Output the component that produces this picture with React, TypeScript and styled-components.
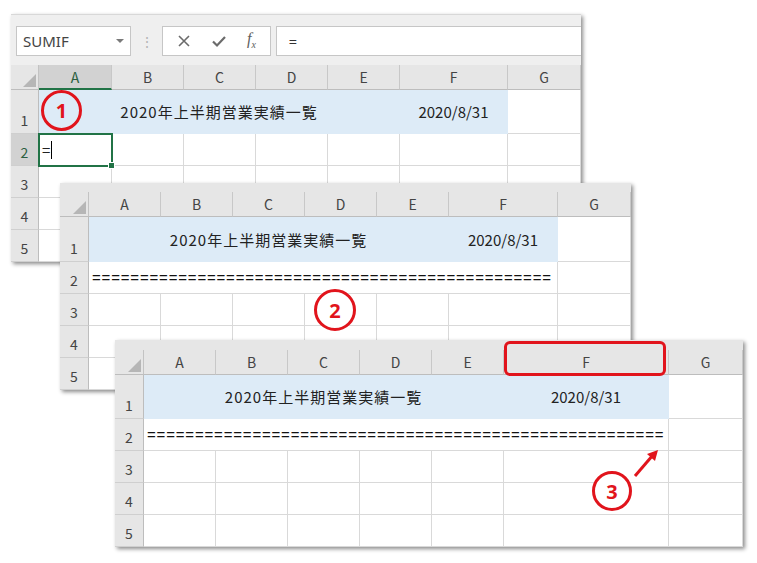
import React from 'react';
import styled, { createGlobalStyle } from 'styled-components';

const GlobalStyle = createGlobalStyle`
  html, body {
    margin: 0;
    padding: 0;
    background: #fff;
  }
  body {
    font-family: "Noto Sans CJK JP", "Noto Sans", sans-serif;
    color: #222;
  }
`;

const RED = '#e1141c';
const GREEN = '#217346';

const Canvas = styled.div`
  position: relative;
  width: 757px;
  height: 563px;
  overflow: hidden;
  background: #fff;
`;

// each screenshot sits on the canvas where it was pasted
const Sheet = styled.div<{ $x: number; $y: number; $z: number }>`
  position: absolute;
  left: ${p => p.$x}px;
  top: ${p => p.$y}px;
  z-index: ${p => p.$z};
  display: flex;
  flex-direction: column;
  background: #e6e6e6;
  box-shadow: 2px 2px 4px rgba(0, 0, 0, 0.45);
`;

const Toolbar = styled.div`
  display: flex;
  align-items: center;
  height: 51px;
  box-sizing: border-box;
  padding: 11px 0 10px 5px;
  background: #efefef;
  border-top: 1px solid #d8d8d8;
`;

const NameBox = styled.div`
  position: relative;
  width: 115px;
  height: 30px;
  box-sizing: border-box;
  display: flex;
  align-items: center;
  padding-left: 6px;
  background: #fff;
  border: 1px solid #c6c6c6;
  font-family: "Noto Sans", "Liberation Sans", sans-serif;
  font-size: 15px;
  color: #444;

  &::after {
    content: '';
    position: absolute;
    right: 6px;
    top: 12px;
    border-left: 4px solid transparent;
    border-right: 4px solid transparent;
    border-top: 4px solid #7a7a7a;
  }
`;

const Dots = styled.div`
  width: 31px;
  text-align: center;
  color: #b5b5b5;
  font-size: 14px;
  line-height: 1;
`;

const FxBox = styled.div`
  width: 109px;
  height: 30px;
  box-sizing: border-box;
  display: flex;
  align-items: center;
  justify-content: space-around;
  padding: 0 4px;
  background: #fff;
  border: 1px solid #c6c6c6;
  color: #6b6b6b;
`;

const FxLabel = styled.span`
  font-family: "Liberation Serif", serif;
  font-style: italic;
  font-size: 16px;
  color: #5e5e5e;

  sub {
    font-size: 10px;
  }
`;

const FormulaInput = styled.div`
  flex: 1;
  height: 30px;
  box-sizing: border-box;
  margin-left: 5px;
  display: flex;
  align-items: center;
  padding-left: 12px;
  background: #fff;
  border: 1px solid #c6c6c6;
  border-right: none;
  font-size: 14px;
  color: #333;
`;

const Strip = styled.div<{ $h: number }>`
  height: ${p => p.$h}px;
  background: #e6e6e6;
`;

const Grid = styled.div<{ $cols: string; $rows: string }>`
  display: grid;
  grid-template-columns: ${p => p.$cols};
  grid-template-rows: ${p => p.$rows};
  background: #fff;
`;

const Corner = styled.div`
  position: relative;
  background: #e6e6e6;
  border-right: 1px solid #c3c3c3;
  border-bottom: 1px solid #bdbdbd;

  &::after {
    content: '';
    position: absolute;
    right: 2px;
    bottom: 2px;
    border-left: 13px solid transparent;
    border-bottom: 13px solid #b6b6b6;
  }
`;

const ColHead = styled.div<{ $active?: boolean }>`
  display: flex;
  align-items: center;
  justify-content: center;
  box-sizing: border-box;
  background: ${p => (p.$active ? '#d2d2d2' : '#e6e6e6')};
  border-right: 1px solid #c8c8c8;
  border-bottom: ${p => (p.$active ? `2px solid ${GREEN}` : '1px solid #bdbdbd')};
  font-size: 14px;
  color: ${p => (p.$active ? '#2b5f40' : '#444')};
`;

const RowHead = styled.div<{ $active?: boolean }>`
  display: flex;
  align-items: flex-end;
  justify-content: center;
  padding-bottom: 3px;
  line-height: 20px;
  box-sizing: border-box;
  background: ${p => (p.$active ? '#d2d2d2' : '#e6e6e6')};
  border-right: 1px solid #bdbdbd;
  border-bottom: 1px solid #cfcfcf;
  font-size: 14px;
  color: ${p => (p.$active ? '#2b5f40' : '#444')};
`;

const Cell = styled.div<{ $span?: number; $fill?: string; $align?: string }>`
  grid-column: span ${p => p.$span ?? 1};
  display: flex;
  align-items: center;
  justify-content: ${p => p.$align ?? 'flex-start'};
  box-sizing: border-box;
  min-width: 0;
  overflow: hidden;
  white-space: nowrap;
  background: ${p => p.$fill ?? '#fff'};
  border-right: 1px solid ${p => p.$fill ?? '#d9d9d9'};
  border-bottom: 1px solid ${p => p.$fill ?? '#d9d9d9'};
  font-size: 15px;
  color: #222;
`;

const Title = styled.span`
  letter-spacing: 1px;
`;

const ActiveCell = styled(Cell)`
  position: relative;
  overflow: visible;
  padding-left: 3px;
  outline: 2px solid ${GREEN};
  outline-offset: -1px;
  z-index: 1;

  &::after {
    content: '';
    position: absolute;
    right: -4px;
    bottom: -4px;
    width: 5px;
    height: 5px;
    background: ${GREEN};
    border: 1px solid #fff;
  }
`;

const Caret = styled.span`
  display: inline-block;
  width: 1px;
  height: 18px;
  margin-left: 1px;
  background: #000;
`;

const Equals = styled.span`
  padding-left: 3px;
  font-family: "Liberation Sans", sans-serif;
  font-size: 15px;
  letter-spacing: 0.82px;
  color: #111;
`;

const Badge = styled.div<{ $x: number; $y: number; $size: number; $bg: string }>`
  position: absolute;
  left: ${p => p.$x}px;
  top: ${p => p.$y}px;
  z-index: 10;
  width: ${p => p.$size}px;
  height: ${p => p.$size}px;
  box-sizing: border-box;
  display: flex;
  align-items: center;
  justify-content: center;
  border: 3px solid ${RED};
  border-radius: 50%;
  background: ${p => p.$bg};
  font-family: "Noto Sans", "Liberation Sans", sans-serif;
  font-weight: 700;
  font-size: 20px;
  color: ${RED};
`;

const Frame = styled.div`
  position: absolute;
  left: 504px;
  top: 341px;
  width: 162px;
  height: 35px;
  box-sizing: border-box;
  z-index: 10;
  border: 3px solid ${RED};
  border-radius: 6px;
`;

const ArrowSvg = styled.svg`
  position: absolute;
  left: 628px;
  top: 444px;
  z-index: 10;
`;

const COLS = ['A', 'B', 'C', 'D', 'E', 'F', 'G'];

type SheetProps = {
  x: number;
  y: number;
  z: number;
  rowHeadW: number;
  colW: number[];
  strip?: number;
  rowH: number[];
  toolbar?: boolean;
  eqCount?: number;
};

const XIcon = () => (
  <svg width="14" height="14" viewBox="0 0 14 14">
    <path d="M2 2 L12 12 M12 2 L2 12" stroke="#6b6b6b" strokeWidth="1.6" fill="none" />
  </svg>
);

const CheckIcon = () => (
  <svg width="16" height="14" viewBox="0 0 16 14">
    <path d="M2 7.5 L6 11.5 L14 3" stroke="#6b6b6b" strokeWidth="2.2" fill="none" />
  </svg>
);

const SheetView = ({ x, y, z, rowHeadW, colW, strip, rowH, toolbar, eqCount }: SheetProps) => {
  const cols = [rowHeadW, ...colW].map(w => `${w}px`).join(' ');
  const rows = [25, ...rowH].map(h => `${h}px`).join(' ');
  const active = !!toolbar;

  return (
    <Sheet $x={x} $y={y} $z={z}>
      {toolbar && (
        <Toolbar>
          <NameBox>SUMIF</NameBox>
          <Dots>⋮</Dots>
          <FxBox>
            <XIcon />
            <CheckIcon />
            <FxLabel>
              f<sub>x</sub>
            </FxLabel>
          </FxBox>
          <FormulaInput>=</FormulaInput>
        </Toolbar>
      )}
      {strip ? <Strip $h={strip} /> : null}
      <Grid $cols={cols} $rows={rows}>
        <Corner />
        {COLS.map((c, i) => (
          <ColHead key={c} $active={active && i === 0}>
            {c}
          </ColHead>
        ))}

        <RowHead>1</RowHead>
        <Cell $span={5} $fill="#ddebf7" $align="center">
          <Title>2020年上半期営業実績一覧</Title>
        </Cell>
        <Cell $fill="#ddebf7" $align="center">
          2020/8/31
        </Cell>
        <Cell />

        <RowHead $active={active}>2</RowHead>
        {eqCount ? (
          <>
            <Cell $span={6}>
              <Equals>{'='.repeat(eqCount)}</Equals>
            </Cell>
            <Cell />
          </>
        ) : (
          <>
            <ActiveCell>
              =<Caret />
            </ActiveCell>
            {COLS.slice(1).map(c => (
              <Cell key={c} />
            ))}
          </>
        )}

        {[3, 4, 5].map(r => (
          <React.Fragment key={r}>
            <RowHead>{r}</RowHead>
            {COLS.map(c => (
              <Cell key={c} />
            ))}
          </React.Fragment>
        ))}
      </Grid>
    </Sheet>
  );
};

export default function App() {
  return (
    <Canvas>
      <GlobalStyle />
      <SheetView
        x={11}
        y={14}
        z={1}
        toolbar
        rowHeadW={28}
        colW={[73, 72, 72, 72, 72, 108, 73]}
        rowH={[44, 32, 32, 32, 32]}
      />
      <SheetView
        x={60}
        y={183}
        z={2}
        strip={9}
        rowHeadW={29}
        colW={[72, 72, 72, 72, 72, 109, 73]}
        rowH={[45, 32, 32, 32, 32]}
        eqCount={48}
      />
      <SheetView
        x={115}
        y={340}
        z={3}
        strip={10}
        rowHeadW={29}
        colW={[72, 72, 72, 72, 72, 165, 74]}
        rowH={[44, 32, 32, 32, 32]}
        eqCount={54}
      />

      <Badge $x={41} $y={90} $size={41} $bg="#ddebf7">1</Badge>
      <Badge $x={314} $y={289} $size={42} $bg="#fff">2</Badge>
      <Badge $x={592} $y={471} $size={40} $bg="#fff">3</Badge>
      <Frame />
      <ArrowSvg width="36" height="40" viewBox="0 0 36 40">
        <path d="M7 32 L25 11" stroke={RED} strokeWidth="3" fill="none" />
        <path d="M30 6 L19 10 L27 17 Z" fill={RED} />
      </ArrowSvg>
    </Canvas>
  );
}
